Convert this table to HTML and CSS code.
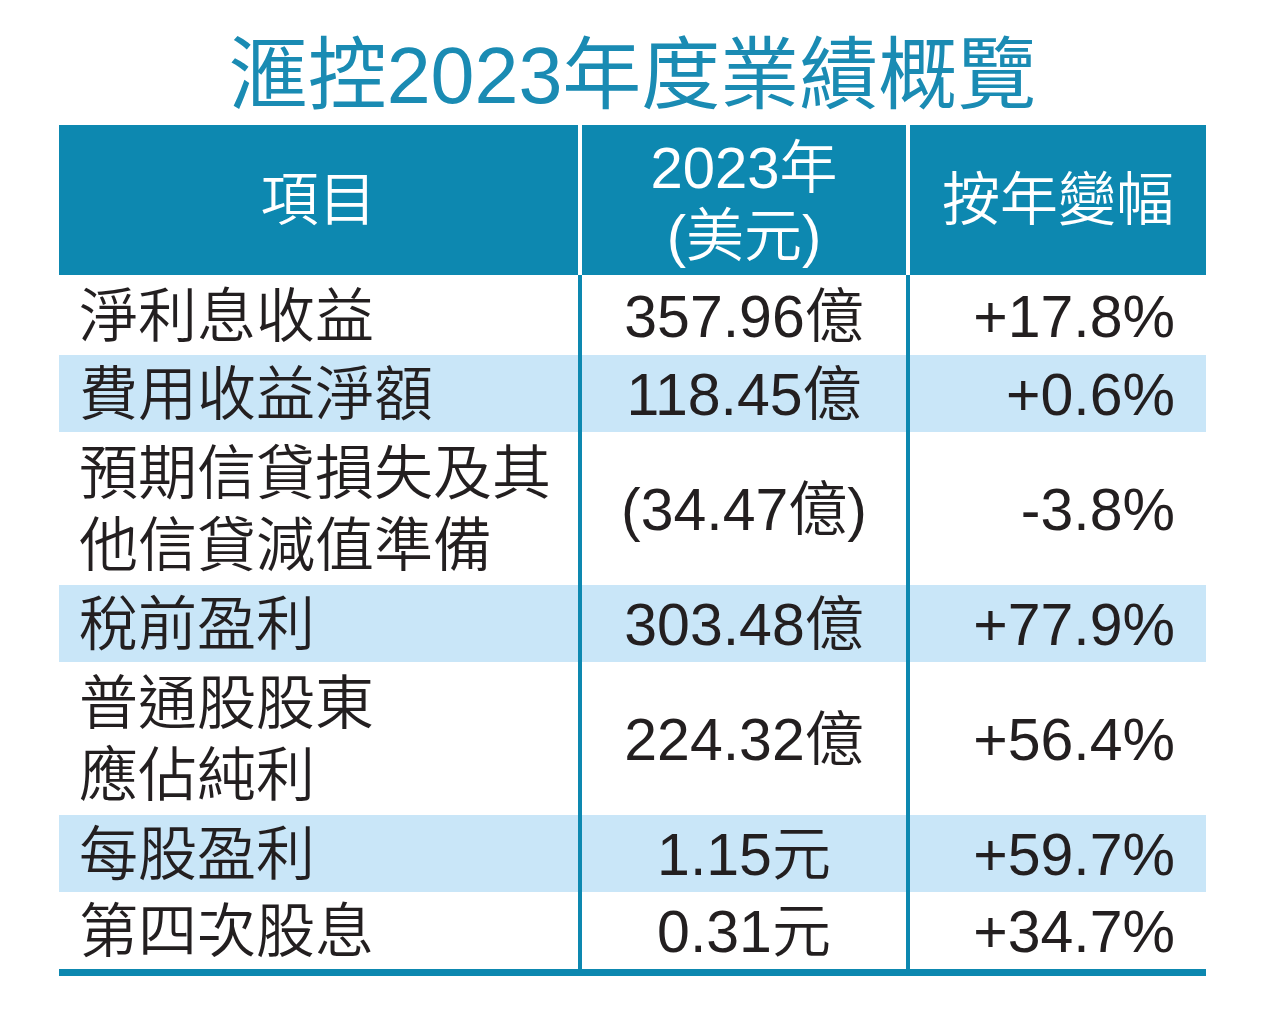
FILE: index.html
```html
<!DOCTYPE html>
<html lang="zh-Hant">
<head>
<meta charset="utf-8">
<title>滙控2023年度業績概覽</title>
<link rel="stylesheet" href="styles.css">
</head>
<body>
<div class="page">
  <h1 class="title">滙控2023年度業績概覽</h1>
  <div class="table">
    <div class="row head">
      <div class="cell c1">項目</div>
      <div class="cell c2"><span>2023年</span><span>(美元)</span></div>
      <div class="cell c3">按年變幅</div>
    </div>
    <div class="row first">
      <div class="cell c1">淨利息收益</div>
      <div class="cell c2">357.96億</div>
      <div class="cell c3">+17.8%</div>
    </div>
    <div class="row alt">
      <div class="cell c1">費用收益淨額</div>
      <div class="cell c2">118.45億</div>
      <div class="cell c3">+0.6%</div>
    </div>
    <div class="row tall">
      <div class="cell c1">預期信貸損失及其<br>他信貸減值準備</div>
      <div class="cell c2">(34.47億)</div>
      <div class="cell c3">-3.8%</div>
    </div>
    <div class="row alt">
      <div class="cell c1">稅前盈利</div>
      <div class="cell c2">303.48億</div>
      <div class="cell c3">+77.9%</div>
    </div>
    <div class="row tall">
      <div class="cell c1">普通股股東<br>應佔純利</div>
      <div class="cell c2">224.32億</div>
      <div class="cell c3">+56.4%</div>
    </div>
    <div class="row alt">
      <div class="cell c1">每股盈利</div>
      <div class="cell c2">1.15元</div>
      <div class="cell c3">+59.7%</div>
    </div>
    <div class="row">
      <div class="cell c1">第四次股息</div>
      <div class="cell c2">0.31元</div>
      <div class="cell c3">+34.7%</div>
    </div>
  </div>
</div>
</body>
</html>
```

FILE: styles.css
```css
html, body {
  margin: 0;
  padding: 0;
  background: #ffffff;
}

body {
  font-family: "Liberation Sans", "Noto Sans CJK TC", sans-serif;
  font-weight: 350;
  color: #231f20;
}

.page {
  padding-top: 37px;
  padding-left: 59px;
  width: 1147px;
}

.title {
  margin: 0 0 10px;
  font-size: 79px;
  line-height: 78px;
  font-weight: 400;
  color: #1a8bb3;
  text-align: center;
  white-space: nowrap;
}

.table {
  width: 1147px;
  border-bottom: 7px solid #0d88b0;
}

.row {
  display: grid;
  grid-template-columns: 519px 324px 296px;
  column-gap: 4px;
  background: #0d88b0;
  height: 77px;
}

.row.first {
  height: 80px;
}

.row.tall {
  height: 153px;
}

.cell {
  background: #ffffff;
  display: flex;
  align-items: center;
  font-size: 59px;
  line-height: 72px;
  padding-top: 3px;
  box-sizing: border-box;
  white-space: nowrap;
}

.row.alt .cell {
  background: #c9e6f8;
}

.c1 {
  padding-left: 20px;
}

.c2 {
  justify-content: center;
}

.c3 {
  justify-content: flex-end;
  padding-right: 31px;
}

.row.head {
  height: 150px;
  background: #ffffff;
}

.row.head .cell {
  background: #0d88b0;
  color: #ffffff;
  justify-content: center;
  padding: 0;
  font-size: 58px;
}

.row.head .c2 {
  flex-direction: column;
  line-height: 68px;
  padding-top: 4px;
}
```
